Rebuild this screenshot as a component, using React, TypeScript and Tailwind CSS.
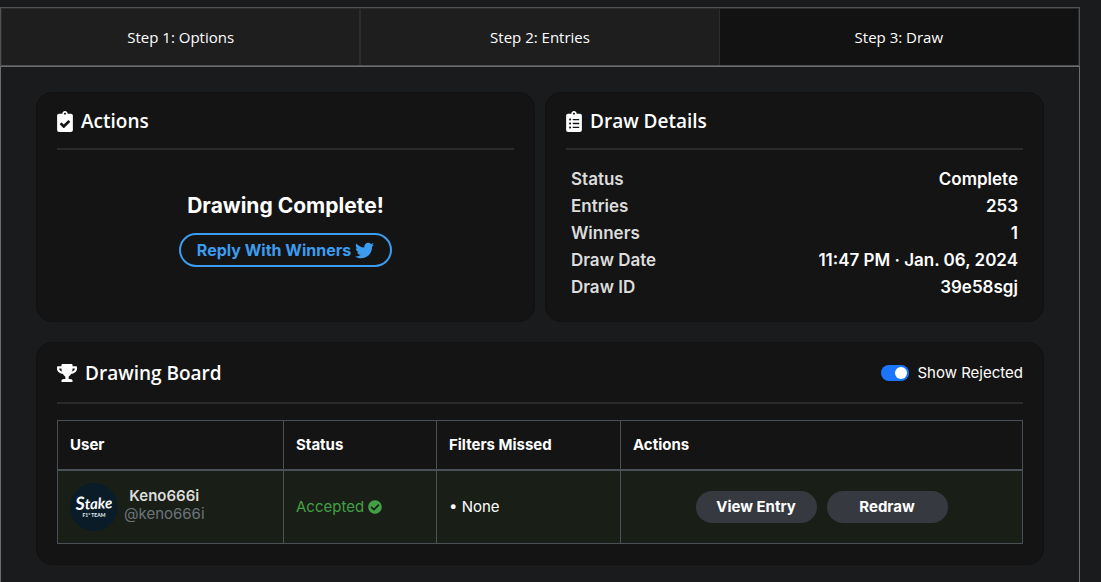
import React, { useState } from 'react';
import {
  FaCheckCircle,
  FaClipboardCheck,
  FaClipboardList,
  FaTrophy,
  FaTwitter,
} from 'react-icons/fa';

interface Winner {
  name: string;
  handle: string;
  status: string;
  missed: string[];
}

const steps = ['Step 1: Options', 'Step 2: Entries', 'Step 3: Draw'];

const details = [
  { label: 'Status', value: 'Complete' },
  { label: 'Entries', value: '253' },
  { label: 'Winners', value: '1' },
  { label: 'Draw Date', value: '11:47 PM · Jan. 06, 2024' },
  { label: 'Draw ID', value: '39e58sgj' },
];

const winners: Winner[] = [
  { name: 'Keno666i', handle: '@keno666i', status: 'Accepted', missed: ['None'] },
];

const columns = [
  { title: 'User', width: 'w-[226px]' },
  { title: 'Status', width: 'w-[153px]' },
  { title: 'Filters Missed', width: 'w-[184px]' },
  { title: 'Actions', width: '' },
];

const Avatar: React.FC = () => (
  <svg viewBox="0 0 48 48" className="h-12 w-12 shrink-0" role="img" aria-label="Stake F1 Team">
    <circle cx="24" cy="24" r="24" fill="#0a1c28" />
    <text
      x="24"
      y="26"
      textAnchor="middle"
      fill="#ffffff"
      fontFamily="Lato, sans-serif"
      fontStyle="italic"
      fontWeight="700"
      fontSize="15"
      transform="rotate(-3 24 24)"
    >
      <tspan fontSize="18">S</tspan>take
    </text>
    <text
      x="24"
      y="34"
      textAnchor="middle"
      fill="#dfe5e8"
      fontFamily="Lato, sans-serif"
      fontWeight="900"
      fontSize="5"
    >
      F1° TEAM
    </text>
  </svg>
);

const Card: React.FC<{ children: React.ReactNode }> = ({ children }) => (
  <section className="rounded-2xl border border-[#111112] bg-[#141414] px-5 pt-4 pb-5">
    {children}
  </section>
);

const Divider = () => <hr className="mt-[15px] h-0.5 border-0 bg-[#2a2a2a]" />;

const App: React.FC = () => {
  const [step, setStep] = useState(2);
  const [showRejected, setShowRejected] = useState(true);

  return (
    <div className="flex min-h-screen flex-col bg-[#1a1b1d] pt-[7px] pr-[21px] font-[Inter,sans-serif] text-[15px] text-white">
      <nav className="grid grid-cols-3 border border-[#505152] font-['Open_Sans',sans-serif]">
        {steps.map((label, index) => (
          <button
            key={label}
            type="button"
            onClick={() => setStep(index)}
            className={`h-[57px] border border-b-0 border-[#2b2c2d] ${
              step === index ? 'border-l-0 bg-[#121212]' : 'bg-[#1e1e1e]'
            }`}
          >
            {label}
          </button>
        ))}
      </nav>

      <main className="flex-1 border border-b-0 border-[#6c6d6e] px-[35px] pt-[25px] pb-4">
        <div className="grid grid-cols-2 gap-[10px]">
          <Card>
            <h2 className="flex items-center gap-2 font-['Open_Sans',sans-serif] text-[19px] leading-6 font-semibold">
              <FaClipboardCheck className="h-[21px] w-4" />
              Actions
            </h2>
            <Divider />
            <div className="flex flex-col items-center pt-10">
              <p className="text-[21px] leading-8 font-bold">Drawing Complete!</p>
              <button
                type="button"
                className="mt-[11px] flex h-[34px] items-center gap-1 rounded-full border-2 border-[#3b9cf0] px-4 text-base font-bold text-[#3b9cf0]"
              >
                Reply With Winners
                <FaTwitter className="h-[19px] w-[19px]" />
              </button>
            </div>
          </Card>

          <Card>
            <h2 className="flex items-center gap-2 font-['Open_Sans',sans-serif] text-[19px] leading-6 font-semibold">
              <FaClipboardList className="h-[21px] w-4" />
              Draw Details
            </h2>
            <Divider />
            <dl className="mt-4 px-[5px] text-[17px] leading-[27px] font-semibold">
              {details.map((item) => (
                <div key={item.label} className="flex justify-between">
                  <dt className="text-[#dcdcdc]">{item.label}</dt>
                  <dd>{item.value}</dd>
                </div>
              ))}
            </dl>
          </Card>
        </div>

        <div className="mt-5">
          <Card>
            <div className="flex items-center justify-between leading-7">
              <h2 className="flex items-center gap-2 font-['Open_Sans',sans-serif] text-[19px] leading-7 font-semibold">
                <FaTrophy className="h-[18px] w-5" />
                Drawing Board
              </h2>
              <label className="flex items-center gap-2">
                <input
                  type="checkbox"
                  role="switch"
                  checked={showRejected}
                  onChange={(e) => setShowRejected(e.target.checked)}
                  className="flex h-4 w-7 appearance-none items-center rounded-full bg-gray-600 px-0.5 before:h-3 before:w-3 before:rounded-full before:bg-white checked:justify-end checked:bg-[#1b76fd]"
                />
                Show Rejected
              </label>
            </div>
            <Divider />
            <table className="mt-4 w-full table-fixed border-collapse border border-[#495057]">
              <thead>
                <tr className="h-[49px] border-b-2 border-[#495057]">
                  {columns.map((column) => (
                    <th
                      key={column.title}
                      className={`border-x border-[#495057] px-3 text-left font-bold ${column.width}`}
                    >
                      {column.title}
                    </th>
                  ))}
                </tr>
              </thead>
              <tbody>
                {winners.map((winner) => (
                  <tr key={winner.handle} className="h-[74px] bg-[#191f16]">
                    <td className="border-x border-[#495057] px-3">
                      <div className="flex items-center gap-1.5">
                        <Avatar />
                        <div className="pb-1 text-center leading-[18px]">
                          <div className="font-semibold text-[#dcdcdc]">{winner.name}</div>
                          <div className="text-[#6c757d]">{winner.handle}</div>
                        </div>
                      </div>
                    </td>
                    <td className="border-x border-[#495057] px-3 text-[#43a047]">
                      <span className="flex items-center gap-1">
                        {winner.status}
                        <FaCheckCircle className="h-3.5 w-3.5" />
                      </span>
                    </td>
                    <td className="border-x border-[#495057] px-3">
                      {winner.missed.map((filter) => (
                        <div key={filter}>• {filter}</div>
                      ))}
                    </td>
                    <td className="border-x border-[#495057] px-3">
                      <div className="flex justify-center gap-[10px] font-bold">
                        <button type="button" className="h-8 w-[121px] rounded-full bg-[#363940]">
                          View Entry
                        </button>
                        <button type="button" className="h-8 w-[121px] rounded-full bg-[#363940]">
                          Redraw
                        </button>
                      </div>
                    </td>
                  </tr>
                ))}
              </tbody>
            </table>
          </Card>
        </div>
      </main>
    </div>
  );
};

export default App;
